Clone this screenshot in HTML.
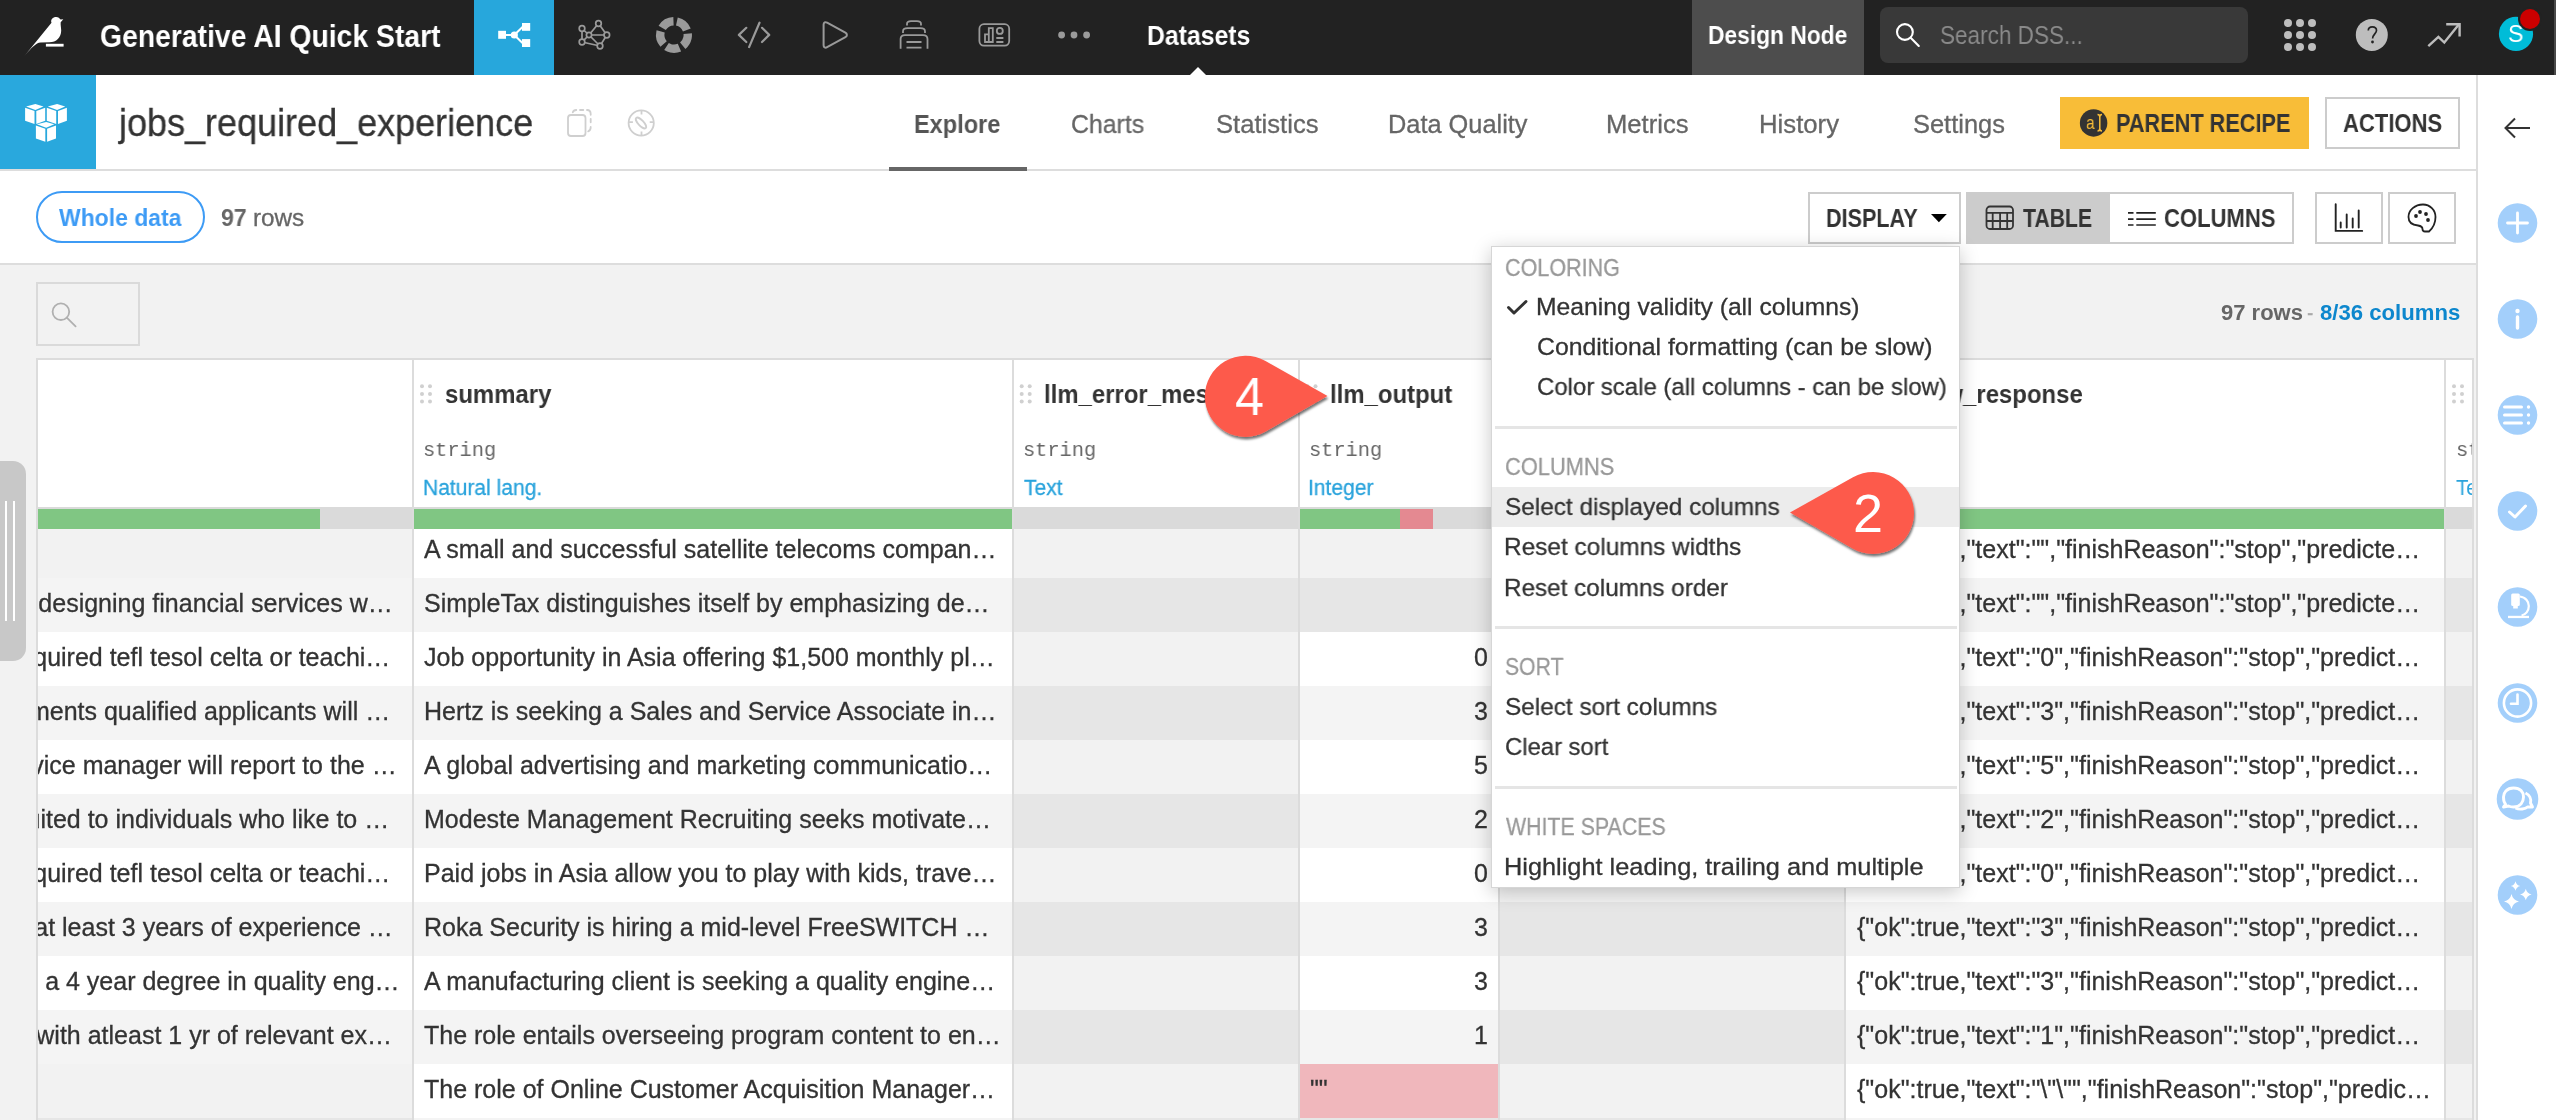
<!DOCTYPE html>
<html><head><meta charset="utf-8"><style>
html,body{margin:0;padding:0;width:2556px;height:1120px;overflow:hidden;background:#f2f2f2;font-family:'Liberation Sans',sans-serif;-webkit-font-smoothing:antialiased}
.t{position:absolute;white-space:pre;line-height:normal;transform-origin:0 0;will-change:transform}
.c{font-family:'Liberation Sans',sans-serif;font-size:25px;-webkit-text-stroke:0.3px #333;line-height:normal;color:#333;white-space:nowrap;overflow:hidden;text-overflow:ellipsis;transform:scaleX(1.0);transform-origin:0 0;will-change:transform}
svg{overflow:visible}
</style></head><body>
<div style="position:absolute;left:0px;top:0px;width:2556px;height:75px;background:#222"></div>
<div style="position:absolute;left:474px;top:0px;width:80px;height:75px;background:#27a7dc"></div>
<div style="position:absolute;left:1692px;top:0px;width:172px;height:75px;background:#4d4d4d"></div>
<div style="position:absolute;left:1880px;top:7px;width:368px;height:56px;background:#393939;border-radius:8px"></div>
<div style="position:absolute;left:2554px;top:0px;width:2px;height:75px;background:#4a4a4a"></div>
<svg style="position:absolute;left:20px;top:12px;" width="50" height="50" viewBox="20 12 50 50"><path fill="#fff" d="M24,56.6 L51.5,22.8 C50.3,19.5 52.8,16.9 56.2,16.9 C58.3,16.9 59.6,18.2 60.6,19.6 L63.3,19.2 L60.7,22.2 C60.4,25 61.2,27.5 61.2,30.5 C61.2,37.5 56.3,42.3 49.5,42.3 L40.5,42.5 C36,43 32,47 24,56.6 Z"/><rect fill="#fff" x="45.9" y="43.8" width="17.7" height="2.8"/></svg>
<div class=t style="left:100.1px;top:17.7px;font-size:32px;font-weight:700;color:#fff;font-family:'Liberation Sans';transform:scaleX(0.8851);">Generative AI Quick Start</div>
<svg style="position:absolute;left:494px;top:15px;" width="40" height="40" viewBox="494 15 40 40"><g fill="#fff" stroke="#fff"><rect x="498.2" y="30.8" width="7.8" height="8" stroke="none"/><rect x="522" y="23" width="8.2" height="7.8" stroke="none"/><rect x="522" y="39.1" width="8.2" height="7.9" stroke="none"/><circle cx="514.3" cy="35" r="3.6" stroke="none"/><path d="M505,35 H514 M514.3,35 L522.5,27 M514.3,35 L522.5,43" stroke-width="2" fill="none"/></g></svg>
<svg style="position:absolute;left:574px;top:15px;" width="40" height="40" viewBox="574 15 40 40"><g stroke="#9a9a9a" stroke-width="1.7" fill="none"><path d="M582,28.5 L589,35 L582,42 Z M589,35 L598.5,23.5 L606.8,35 L600,46 L589,35 M589,35 H606.8 M582,42 L600,46"/><g fill="#222"><circle cx="582" cy="28.5" r="2.8"/><circle cx="598.5" cy="23.5" r="2.8"/><circle cx="606.8" cy="35" r="2.8"/><circle cx="589" cy="35" r="2.6"/><circle cx="582" cy="42" r="2.8"/><circle cx="600" cy="46" r="2.8"/></g></g></svg>
<svg style="position:absolute;left:654px;top:15px;" width="40" height="40" viewBox="654 15 40 40"><circle cx="674" cy="35" r="13.8" fill="none" stroke="#9a9a9a" stroke-width="8.4" stroke-dasharray="13.5 3.8" transform="rotate(-78 674 35)"/></svg>
<svg style="position:absolute;left:734px;top:15px;" width="40" height="40" viewBox="734 15 40 40"><g stroke="#9a9a9a" stroke-width="2.2" fill="none" stroke-linecap="round" stroke-linejoin="round"><path d="M746.3,27.8 L738.9,34.9 L746.3,42 M762,27.8 L769.2,34.9 L762,42 M759.5,22.7 L749.1,47.1"/></g></svg>
<svg style="position:absolute;left:814px;top:15px;" width="40" height="40" viewBox="814 15 40 40"><path d="M823.6,24.6 C823.6,22.4 825.2,21.6 827.1,22.6 L845.4,32.6 C847.4,33.7 847.4,36.1 845.4,37.2 L827.1,47.2 C825.2,48.2 823.6,47.4 823.6,45.2 Z" fill="none" stroke="#9a9a9a" stroke-width="2" stroke-linejoin="round"/></svg>
<svg style="position:absolute;left:894px;top:15px;" width="40" height="40" viewBox="894 15 40 40"><g stroke="#9a9a9a" stroke-width="1.8" fill="none"><path d="M907,25.5 V24 C907,22 909,21.2 911,21.2 H917 C919,21.2 921,22 921,24 V25.5 M903,33 V31.5 C903,29.5 905,28.2 907.5,28.2 H920.5 C923,28.2 925,29.5 925,31.5 V33 M900.6,48.8 V39 C900.6,36.5 902.5,35.2 905,35.2 H923 C925.5,35.2 927.5,36.5 927.5,39 V48.8 M906.5,42 H921.5 M906.5,47.6 H921.5"/></g></svg>
<svg style="position:absolute;left:974px;top:15px;" width="40" height="40" viewBox="974 15 40 40"><g stroke="#9a9a9a" stroke-width="1.8" fill="none"><rect x="979.4" y="24.2" width="29.8" height="21.4" rx="4.5"/><path d="M985,42 V34.3 H988.8 V42 Z M988.8,42 V28.2 H992.8 V42 Z"/><circle cx="999.8" cy="30.9" r="3"/><path d="M996.3,38 H1003.4 M996.3,42 H1003.4"/></g></svg>
<svg style="position:absolute;left:1054px;top:25px;" width="40" height="20" viewBox="1054 25 40 20"><g fill="#9a9a9a"><circle cx="1061.6" cy="35" r="3.4"/><circle cx="1074" cy="35" r="3.4"/><circle cx="1086.6" cy="35" r="3.4"/></g></svg>
<div class=t style="left:1147.1px;top:20.6px;font-size:27px;font-weight:700;color:#fff;font-family:'Liberation Sans';transform:scaleX(0.9182);">Datasets</div>
<svg style="position:absolute;left:1188px;top:66px;" width="20" height="9" viewBox="1188 66 20 9"><path d="M1190,75 L1198,67 L1206,75 Z" fill="#fff"/></svg>
<div class=t style="left:1708.3px;top:20.1px;font-size:26px;font-weight:700;color:#fff;font-family:'Liberation Sans';transform:scaleX(0.8765);">Design Node</div>
<svg style="position:absolute;left:1890px;top:18px;" width="36" height="36" viewBox="1890 18 36 36"><g stroke="#fff" stroke-width="2.1" fill="none"><circle cx="1904.9" cy="32" r="7.9"/><path d="M1910.9,38.1 L1918.8,46" stroke-linecap="round"/></g></svg>
<div class=t style="left:1940.1px;top:20.1px;font-size:26px;font-weight:400;color:#8a8a8a;font-family:'Liberation Sans';transform:scaleX(0.8668);">Search DSS...</div>
<svg style="position:absolute;left:2280px;top:15px;" width="40" height="40" viewBox="2280 15 40 40"><g fill="#bdbdbd"><circle cx="2288" cy="23" r="4"/><circle cx="2288" cy="35" r="4"/><circle cx="2288" cy="47" r="4"/><circle cx="2300" cy="23" r="4"/><circle cx="2300" cy="35" r="4"/><circle cx="2300" cy="47" r="4"/><circle cx="2312" cy="23" r="4"/><circle cx="2312" cy="35" r="4"/><circle cx="2312" cy="47" r="4"/></g></svg>
<svg style="position:absolute;left:2350px;top:13px;" width="44" height="44" viewBox="2350 13 44 44"><circle cx="2371.8" cy="34.9" r="16" fill="#bdbdbd"/><path d="M2368.3,30.5 C2368.3,27.5 2370,26.8 2372.3,26.8 C2374.8,26.8 2376.5,28.3 2376.5,30.5 C2376.5,33.5 2372.6,34.5 2372.6,38.5" stroke="#222" stroke-width="1.7" fill="none"/><circle cx="2372.5" cy="42" r="1.4" fill="#222"/></svg>
<svg style="position:absolute;left:2420px;top:15px;" width="48" height="40" viewBox="2420 15 48 40"><g stroke="#bdbdbd" stroke-width="2.4" fill="none"><path d="M2428.3,46.1 L2438.4,36.9 L2444.3,42.5 L2459,24.3"/><path d="M2446.2,24.2 H2459.6 V36.4"/></g></svg>
<svg style="position:absolute;left:2490px;top:0px;" width="66" height="60" viewBox="2490 0 66 60"><circle cx="2516" cy="33.9" r="17.1" fill="#00bcd8"/><circle cx="2530" cy="19" r="12" fill="#222"/><circle cx="2530" cy="19" r="10" fill="#cc0000"/></svg>
<div class=t style="left:2507.5px;top:20.4px;font-size:24px;font-weight:400;color:#fff;font-family:'Liberation Sans';transform:scaleX(0.9643);">S</div>
<div style="position:absolute;left:0px;top:75px;width:2477px;height:188px;background:#fff"></div>
<div style="position:absolute;left:0px;top:169px;width:2477px;height:2px;background:#ddd"></div>
<div style="position:absolute;left:0px;top:263px;width:2477px;height:2px;background:#ddd"></div>
<div style="position:absolute;left:0px;top:75px;width:96px;height:94px;background:#29a8dd"></div>
<svg style="position:absolute;left:20px;top:100px;" width="52" height="46" viewBox="20 100 52 46"><g fill="#fff"><polygon points="26.1,106.5 35.4,104.1 43.5,106.5 35.4,110.0"/><polygon points="25.1,107.8 34.5,111.0 34.5,124.0 25.1,120.8"/><polygon points="36.3,111.0 45.2,107.8 45.2,120.8 36.3,124.0"/><polygon points="47.8,106.5 57.1,104.1 65.2,106.5 57.1,110.0"/><polygon points="46.8,107.8 56.2,111.0 56.2,124.0 46.8,120.8"/><polygon points="58.0,111.0 66.9,107.8 66.9,120.8 58.0,124.0"/><polygon points="36.9,124.3 46.2,121.9 54.3,124.3 46.2,127.8"/><polygon points="35.9,125.6 45.3,128.8 45.3,141.8 35.9,138.6"/><polygon points="47.1,128.8 56.0,125.6 56.0,138.6 47.1,141.8"/></g></svg>
<div class=t style="left:118.9px;top:102.0px;font-size:38px;font-weight:400;color:#333;font-family:'Liberation Sans';transform:scaleX(0.9470);-webkit-text-stroke:0.3px #333;">jobs_required_experience</div>
<svg style="position:absolute;left:562px;top:104px;" width="34" height="38" viewBox="562 104 34 38"><g stroke="#cfcfcf" stroke-width="1.8" fill="none" stroke-linecap="round"><rect x="568" y="115" width="17.5" height="21" rx="3"/><path d="M572.8,112.3 C573.3,110.6 574.6,110 576.3,110 M580,110 H583.3 M587,110 C589.5,110 590.7,111.5 590.7,114 V114.8 M590.7,118.8 V122.3 M590.7,127 C590.7,129.8 589.6,131 588.2,131.4"/></g></svg>
<svg style="position:absolute;left:620px;top:102px;" width="42" height="42" viewBox="620 102 42 42"><g stroke="#cfcfcf" stroke-width="1.8" fill="none"><circle cx="641.2" cy="123" r="12.6"/><path d="M641.5,110.8 V114.6 M641.5,131.4 V135.2 M629,122.2 H632.9 M649.7,122.2 H653.5"/><ellipse cx="641" cy="123" rx="7" ry="2.7" transform="rotate(47 641 123)"/></g></svg>
<div class=t style="left:914.1px;top:108.6px;font-size:26px;font-weight:700;color:#555;font-family:'Liberation Sans';transform:scaleX(0.9051);">Explore</div>
<div style="position:absolute;left:889px;top:167px;width:138px;height:4px;background:#666"></div>
<div class=t style="left:1071.0px;top:109.5px;font-size:25px;font-weight:400;color:#666;font-family:'Liberation Sans';transform:scaleX(0.9926);-webkit-text-stroke:0.3px #666;">Charts</div>
<div class=t style="left:1216.0px;top:109.5px;font-size:25px;font-weight:400;color:#666;font-family:'Liberation Sans';transform:scaleX(1.0251);-webkit-text-stroke:0.3px #666;">Statistics</div>
<div class=t style="left:1388.0px;top:109.5px;font-size:25px;font-weight:400;color:#666;font-family:'Liberation Sans';transform:scaleX(1.0143);-webkit-text-stroke:0.3px #666;">Data Quality</div>
<div class=t style="left:1605.5px;top:109.5px;font-size:25px;font-weight:400;color:#666;font-family:'Liberation Sans';transform:scaleX(1.0249);-webkit-text-stroke:0.3px #666;">Metrics</div>
<div class=t style="left:1759.4px;top:109.5px;font-size:25px;font-weight:400;color:#666;font-family:'Liberation Sans';transform:scaleX(1.0291);-webkit-text-stroke:0.3px #666;">History</div>
<div class=t style="left:1912.6px;top:109.5px;font-size:25px;font-weight:400;color:#666;font-family:'Liberation Sans';transform:scaleX(1.0177);-webkit-text-stroke:0.3px #666;">Settings</div>
<div style="position:absolute;left:2060px;top:97px;width:249px;height:52px;background:#f8bd38"></div>
<svg style="position:absolute;left:2076px;top:106px;" width="36" height="36" viewBox="2076 106 36 36"><circle cx="2093.6" cy="122.9" r="13.75" fill="#333"/></svg>
<div class=t style="left:2086.0px;top:112.0px;font-size:19px;font-weight:400;color:#f8bd38;font-family:'Liberation Sans';transform:scaleX(0.8182);">a</div>
<svg style="position:absolute;left:2094px;top:112px;" width="10" height="24" viewBox="2094 112 10 24"><g stroke="#f8bd38" stroke-width="1.5" fill="none"><path d="M2097.5,114.5 C2099,114.5 2099.8,115.5 2099.8,117 V128.5 C2099.8,130 2099,131 2097.5,131 M2102,114.5 C2100.6,114.5 2099.8,115.5 2099.8,117 M2099.8,128.5 C2099.8,130 2100.6,131 2102,131"/></g></svg>
<div class=t style="left:2116.1px;top:109.0px;font-size:25px;font-weight:700;color:#333;font-family:'Liberation Sans';transform:scaleX(0.8681);">PARENT RECIPE</div>
<div style="position:absolute;left:2325px;top:97px;width:135px;height:52px;background:#fff;box-sizing:border-box;border:2px solid #ccc"></div>
<div class=t style="left:2343.0px;top:109.0px;font-size:25px;font-weight:700;color:#333;font-family:'Liberation Sans';transform:scaleX(0.8817);">ACTIONS</div>
<div style="position:absolute;left:2477px;top:75px;width:79px;height:1045px;background:#fff"></div>
<div style="position:absolute;left:2476px;top:75px;width:2px;height:1045px;background:#ddd"></div>
<svg style="position:absolute;left:2500px;top:110px;" width="36" height="36" viewBox="2500 110 36 36"><g stroke="#333" stroke-width="2" fill="none"><path d="M2505.5,128 H2530 M2515,118.5 L2505.5,128 L2515,137.5"/></g></svg>
<svg style="position:absolute;left:2490px;top:190px;" width="60" height="740" viewBox="2490 190 60 740"><circle cx="2517.5" cy="223" r="19.8" fill="#a3cffb"/><circle cx="2517.5" cy="319" r="19.8" fill="#a3cffb"/><circle cx="2517.5" cy="415" r="19.8" fill="#a3cffb"/><circle cx="2517.5" cy="511" r="19.8" fill="#a3cffb"/><circle cx="2517.5" cy="607" r="19.8" fill="#a3cffb"/><circle cx="2517.5" cy="703" r="19.8" fill="#a3cffb"/><circle cx="2517.5" cy="799" r="20.8" fill="#a3cffb"/><circle cx="2517.5" cy="895" r="19.8" fill="#a3cffb"/><path d="M2517.5,213 V233 M2507.5,223 H2527.5" stroke="#fff" stroke-width="2.8" stroke-linecap="round"/><circle cx="2517.5" cy="311" r="2.2" fill="#fff"/><path d="M2517.5,317 V328" stroke="#fff" stroke-width="3.4" stroke-linecap="round"/><path d="M2504.5,407 H2521.5" stroke="#fff" stroke-width="3" stroke-linecap="round"/><circle cx="2528.5" cy="407" r="1.7" fill="#fff"/><path d="M2504.5,415 H2521.5" stroke="#fff" stroke-width="3" stroke-linecap="round"/><circle cx="2528.5" cy="415" r="1.7" fill="#fff"/><path d="M2504.5,423 H2521.5" stroke="#fff" stroke-width="3" stroke-linecap="round"/><circle cx="2528.5" cy="423" r="1.7" fill="#fff"/><path d="M2509.5,512 L2515.0,517 L2525.5,506" stroke="#fff" stroke-width="3" stroke-linecap="round" stroke-linejoin="round" fill="none"/><g fill="#fff"><rect x="2511.2" y="593.5" width="8.6" height="12.5" rx="1.5"/><rect x="2513.2" y="605" width="4.6" height="3.5"/><path d="M2519.8,596.5 C2526.0,597 2528.8,602 2528.8,606 C2528.8,611 2525.5,615 2521.5,615.5" stroke="#fff" stroke-width="2.2" fill="none"/><rect x="2508.0" y="615.8" width="21" height="2.3"/></g><circle cx="2517.5" cy="703" r="13.6" stroke="#fff" stroke-width="2.6" fill="none"/><path d="M2517.5,694.5 V703.8 H2511.0" stroke="#fff" stroke-width="2.6" fill="none" stroke-linecap="round"/><g stroke="#fff" stroke-width="2.9" fill="none" stroke-linejoin="round"><path d="M2513.5,788 C2506.5,788 2503.5,793 2503.5,797 C2503.5,801 2504.5,803 2505.5,804 L2503.5,807 L2508.5,806 C2509.5,806.5 2511.5,807 2513.5,807 C2520.5,807 2523.5,802 2523.5,797 C2523.5,792 2520.5,788 2513.5,788 Z"/><path d="M2525.5,793 C2529.5,795 2531.5,799 2530.5,803 L2532.5,807 L2527.5,807 C2525.5,809 2519.5,810 2515.5,808"/></g><path d="M2511.5,894.0 Q2512.85,900.15 2519.0,901.5 Q2512.85,902.85 2511.5,909.0 Q2510.15,902.85 2504.0,901.5 Q2510.15,900.15 2511.5,894.0 Z" fill="#fff"/><path d="M2525.8,888.7 Q2526.844,893.456 2531.6000000000004,894.5 Q2526.844,895.544 2525.8,900.3 Q2524.7560000000003,895.544 2520.0,894.5 Q2524.7560000000003,893.456 2525.8,888.7 Z" fill="#fff"/><path d="M2515.5,881.2 Q2516.364,885.136 2520.3,886 Q2516.364,886.864 2515.5,890.8 Q2514.636,886.864 2510.7,886 Q2514.636,885.136 2515.5,881.2 Z" fill="#fff"/></svg>
<div style="position:absolute;left:36px;top:191px;width:169px;height:52px;box-sizing:border-box;border:2px solid #3d9bf5;border-radius:26px"></div>
<div class=t style="left:58.5px;top:204.1px;font-size:24px;font-weight:700;color:#3d9bf5;font-family:'Liberation Sans';transform:scaleX(0.9560);">Whole data</div>
<div class=t style="left:221.4px;top:203.7px;font-size:24px;font-weight:700;color:#666;font-family:'Liberation Sans';transform:scaleX(0.9640);">97</div>
<div class=t style="left:253.3px;top:203.7px;font-size:24px;font-weight:400;color:#666;font-family:'Liberation Sans';transform:scaleX(1.0106);-webkit-text-stroke:0.3px #666;">rows</div>
<div style="position:absolute;left:1808px;top:192px;width:153px;height:52px;background:#fff;box-sizing:border-box;border:2px solid #ccc"></div>
<div class=t style="left:1826.1px;top:203.8px;font-size:25px;font-weight:700;color:#333;font-family:'Liberation Sans';transform:scaleX(0.8635);">DISPLAY</div>
<svg style="position:absolute;left:1928px;top:210px;" width="22" height="16" viewBox="1928 210 22 16"><path d="M1931,214 L1946.8,214 L1938.9,222.3 Z" fill="#000"/></svg>
<div style="position:absolute;left:1966px;top:192px;width:328px;height:52px;background:#fff;box-sizing:border-box;border:2px solid #ccc"></div>
<div style="position:absolute;left:1966px;top:192px;width:144px;height:52px;background:#ccc"></div>
<svg style="position:absolute;left:1982px;top:202px;" width="36" height="32" viewBox="1982 202 36 32"><g stroke="#333" stroke-width="1.8" fill="none"><rect x="1986.5" y="206.5" width="26.5" height="22.5" rx="3.5"/><path d="M1986.5,212.8 H2013 M1986.5,221 H2013 M1992.7,212.8 V229 M2000.1,212.8 V229 M2007.2,212.8 V229"/></g></svg>
<div class=t style="left:2022.5px;top:203.8px;font-size:25px;font-weight:700;color:#333;font-family:'Liberation Sans';transform:scaleX(0.8478);">TABLE</div>
<svg style="position:absolute;left:2124px;top:206px;" width="36" height="24" viewBox="2124 206 36 24"><g stroke="#222" stroke-width="1.6"><path d="M2128,212.9 H2133.5 M2128,219.1 H2133.5 M2128,225 H2133.5 M2136.3,212.9 H2155.8 M2136.3,219.1 H2155.8 M2136.3,225 H2155.8"/></g></svg>
<div class=t style="left:2164.1px;top:203.8px;font-size:25px;font-weight:700;color:#333;font-family:'Liberation Sans';transform:scaleX(0.8821);">COLUMNS</div>
<div style="position:absolute;left:2315px;top:192px;width:68px;height:52px;background:#fff;box-sizing:border-box;border:2px solid #ccc"></div>
<div style="position:absolute;left:2388px;top:192px;width:68px;height:52px;background:#fff;box-sizing:border-box;border:2px solid #ccc"></div>
<svg style="position:absolute;left:2328px;top:200px;" width="40" height="36" viewBox="2328 200 40 36"><g stroke="#222" stroke-width="1.9" fill="none" stroke-linecap="round"><path d="M2335.7,204.3 V230.9 H2362.2 M2340.7,222.5 V227.5 M2346.7,214.5 V227.5 M2352.7,218.5 V227.5 M2358.7,210.5 V227.5"/></g></svg>
<svg style="position:absolute;left:2402px;top:200px;" width="40" height="36" viewBox="2402 200 40 36"><path d="M2423,204.5 C2415,204.5 2408.5,210 2408.5,217 C2408.5,222 2412,225 2418,225.5 C2421,226 2422.5,227 2422.5,229 C2422.5,231 2423.5,231.5 2425,231.5 L2429,231.5 C2433,228 2435.5,223 2435.5,217 C2435.5,210 2430,204.5 2423,204.5 Z" stroke="#222" stroke-width="1.8" fill="none"/><g fill="#222"><circle cx="2416" cy="216" r="1.9"/><circle cx="2420" cy="212" r="1.9"/><circle cx="2426" cy="214" r="1.9"/><circle cx="2428" cy="220" r="1.9"/></g></svg>
<div style="position:absolute;left:0px;top:265px;width:2476px;height:855px;background:#f2f2f2"></div>
<div style="position:absolute;left:36px;top:282px;width:104px;height:64px;box-sizing:border-box;border:2px solid #dadada"></div>
<svg style="position:absolute;left:48px;top:300px;" width="32" height="32" viewBox="48 300 32 32"><g stroke="#b0b0b0" stroke-width="1.8" fill="none"><circle cx="60.9" cy="311.7" r="8.3"/><path d="M66.8,317.6 L75.6,326.4" stroke-linecap="round"/></g></svg>
<div class=t style="left:2220.5px;top:299.8px;font-size:22px;font-weight:700;color:#666;font-family:'Liberation Sans';transform:scaleX(0.9976);">97 rows</div>
<div class=t style="left:2307.0px;top:299.8px;font-size:22px;font-weight:400;color:#aaa;font-family:'Liberation Sans';transform:scaleX(0.8571);-webkit-text-stroke:0.3px #aaa;">-</div>
<div class=t style="left:2320.0px;top:299.8px;font-size:22px;font-weight:700;color:#0d87cd;font-family:'Liberation Sans';transform:scaleX(1.0061);">8/36 columns</div>
<div style="position:absolute;left:0px;top:461px;width:26px;height:200px;background:#c8c8c8;border-radius:0 13px 13px 0"></div>
<div style="position:absolute;left:5px;top:501px;width:2px;height:120px;background:#fff"></div>
<div style="position:absolute;left:13px;top:501px;width:2px;height:120px;background:#fff"></div>
<div style="position:absolute;left:36px;top:358px;width:2438px;height:762px;background:#fff"></div>
<div style="position:absolute;left:38px;top:360px;width:2434px;height:147px;background:#fff"></div>
<div style="position:absolute;left:38px;top:507px;width:2434px;height:22px;background:#dadada"></div>
<div style="position:absolute;left:38px;top:529px;width:374px;height:49px;background:#f2f2f2"></div>
<div style="position:absolute;left:38px;top:578px;width:374px;height:54px;background:#f4f4f4"></div>
<div style="position:absolute;left:38px;top:632px;width:374px;height:54px;background:#ffffff"></div>
<div style="position:absolute;left:38px;top:686px;width:374px;height:54px;background:#f4f4f4"></div>
<div style="position:absolute;left:38px;top:740px;width:374px;height:54px;background:#ffffff"></div>
<div style="position:absolute;left:38px;top:794px;width:374px;height:54px;background:#f4f4f4"></div>
<div style="position:absolute;left:38px;top:848px;width:374px;height:54px;background:#ffffff"></div>
<div style="position:absolute;left:38px;top:902px;width:374px;height:54px;background:#f4f4f4"></div>
<div style="position:absolute;left:38px;top:956px;width:374px;height:54px;background:#ffffff"></div>
<div style="position:absolute;left:38px;top:1010px;width:374px;height:54px;background:#f4f4f4"></div>
<div style="position:absolute;left:38px;top:1064px;width:374px;height:54px;background:#f2f2f2"></div>
<div style="position:absolute;left:38px;top:1118px;width:374px;height:2px;background:#e6e6e6"></div>
<div style="position:absolute;left:414px;top:529px;width:598px;height:49px;background:#ffffff"></div>
<div style="position:absolute;left:414px;top:578px;width:598px;height:54px;background:#f4f4f4"></div>
<div style="position:absolute;left:414px;top:632px;width:598px;height:54px;background:#ffffff"></div>
<div style="position:absolute;left:414px;top:686px;width:598px;height:54px;background:#f4f4f4"></div>
<div style="position:absolute;left:414px;top:740px;width:598px;height:54px;background:#ffffff"></div>
<div style="position:absolute;left:414px;top:794px;width:598px;height:54px;background:#f4f4f4"></div>
<div style="position:absolute;left:414px;top:848px;width:598px;height:54px;background:#ffffff"></div>
<div style="position:absolute;left:414px;top:902px;width:598px;height:54px;background:#f4f4f4"></div>
<div style="position:absolute;left:414px;top:956px;width:598px;height:54px;background:#ffffff"></div>
<div style="position:absolute;left:414px;top:1010px;width:598px;height:54px;background:#f4f4f4"></div>
<div style="position:absolute;left:414px;top:1064px;width:598px;height:54px;background:#ffffff"></div>
<div style="position:absolute;left:414px;top:1118px;width:598px;height:2px;background:#f4f4f4"></div>
<div style="position:absolute;left:1014px;top:529px;width:284px;height:49px;background:#f2f2f2"></div>
<div style="position:absolute;left:1014px;top:578px;width:284px;height:54px;background:#e6e6e6"></div>
<div style="position:absolute;left:1014px;top:632px;width:284px;height:54px;background:#f2f2f2"></div>
<div style="position:absolute;left:1014px;top:686px;width:284px;height:54px;background:#e6e6e6"></div>
<div style="position:absolute;left:1014px;top:740px;width:284px;height:54px;background:#f2f2f2"></div>
<div style="position:absolute;left:1014px;top:794px;width:284px;height:54px;background:#e6e6e6"></div>
<div style="position:absolute;left:1014px;top:848px;width:284px;height:54px;background:#f2f2f2"></div>
<div style="position:absolute;left:1014px;top:902px;width:284px;height:54px;background:#e6e6e6"></div>
<div style="position:absolute;left:1014px;top:956px;width:284px;height:54px;background:#f2f2f2"></div>
<div style="position:absolute;left:1014px;top:1010px;width:284px;height:54px;background:#e6e6e6"></div>
<div style="position:absolute;left:1014px;top:1064px;width:284px;height:54px;background:#f2f2f2"></div>
<div style="position:absolute;left:1014px;top:1118px;width:284px;height:2px;background:#e6e6e6"></div>
<div style="position:absolute;left:1300px;top:529px;width:198px;height:49px;background:#f2f2f2"></div>
<div style="position:absolute;left:1300px;top:578px;width:198px;height:54px;background:#e6e6e6"></div>
<div style="position:absolute;left:1300px;top:632px;width:198px;height:54px;background:#ffffff"></div>
<div style="position:absolute;left:1300px;top:686px;width:198px;height:54px;background:#f4f4f4"></div>
<div style="position:absolute;left:1300px;top:740px;width:198px;height:54px;background:#ffffff"></div>
<div style="position:absolute;left:1300px;top:794px;width:198px;height:54px;background:#f4f4f4"></div>
<div style="position:absolute;left:1300px;top:848px;width:198px;height:54px;background:#ffffff"></div>
<div style="position:absolute;left:1300px;top:902px;width:198px;height:54px;background:#f4f4f4"></div>
<div style="position:absolute;left:1300px;top:956px;width:198px;height:54px;background:#ffffff"></div>
<div style="position:absolute;left:1300px;top:1010px;width:198px;height:54px;background:#f4f4f4"></div>
<div style="position:absolute;left:1300px;top:1064px;width:198px;height:54px;background:#f0b7bc"></div>
<div style="position:absolute;left:1300px;top:1118px;width:198px;height:2px;background:#e6e6e6"></div>
<div style="position:absolute;left:1500px;top:529px;width:344px;height:49px;background:#f2f2f2"></div>
<div style="position:absolute;left:1500px;top:578px;width:344px;height:54px;background:#e6e6e6"></div>
<div style="position:absolute;left:1500px;top:632px;width:344px;height:54px;background:#f2f2f2"></div>
<div style="position:absolute;left:1500px;top:686px;width:344px;height:54px;background:#e6e6e6"></div>
<div style="position:absolute;left:1500px;top:740px;width:344px;height:54px;background:#f2f2f2"></div>
<div style="position:absolute;left:1500px;top:794px;width:344px;height:54px;background:#e6e6e6"></div>
<div style="position:absolute;left:1500px;top:848px;width:344px;height:54px;background:#f2f2f2"></div>
<div style="position:absolute;left:1500px;top:902px;width:344px;height:54px;background:#e6e6e6"></div>
<div style="position:absolute;left:1500px;top:956px;width:344px;height:54px;background:#f2f2f2"></div>
<div style="position:absolute;left:1500px;top:1010px;width:344px;height:54px;background:#e6e6e6"></div>
<div style="position:absolute;left:1500px;top:1064px;width:344px;height:54px;background:#f2f2f2"></div>
<div style="position:absolute;left:1500px;top:1118px;width:344px;height:2px;background:#e6e6e6"></div>
<div style="position:absolute;left:1846px;top:529px;width:598px;height:49px;background:#ffffff"></div>
<div style="position:absolute;left:1846px;top:578px;width:598px;height:54px;background:#f4f4f4"></div>
<div style="position:absolute;left:1846px;top:632px;width:598px;height:54px;background:#ffffff"></div>
<div style="position:absolute;left:1846px;top:686px;width:598px;height:54px;background:#f4f4f4"></div>
<div style="position:absolute;left:1846px;top:740px;width:598px;height:54px;background:#ffffff"></div>
<div style="position:absolute;left:1846px;top:794px;width:598px;height:54px;background:#f4f4f4"></div>
<div style="position:absolute;left:1846px;top:848px;width:598px;height:54px;background:#ffffff"></div>
<div style="position:absolute;left:1846px;top:902px;width:598px;height:54px;background:#f4f4f4"></div>
<div style="position:absolute;left:1846px;top:956px;width:598px;height:54px;background:#ffffff"></div>
<div style="position:absolute;left:1846px;top:1010px;width:598px;height:54px;background:#f4f4f4"></div>
<div style="position:absolute;left:1846px;top:1064px;width:598px;height:54px;background:#ffffff"></div>
<div style="position:absolute;left:1846px;top:1118px;width:598px;height:2px;background:#f4f4f4"></div>
<div style="position:absolute;left:2446px;top:529px;width:26px;height:49px;background:#f2f2f2"></div>
<div style="position:absolute;left:2446px;top:578px;width:26px;height:54px;background:#e6e6e6"></div>
<div style="position:absolute;left:2446px;top:632px;width:26px;height:54px;background:#f2f2f2"></div>
<div style="position:absolute;left:2446px;top:686px;width:26px;height:54px;background:#e6e6e6"></div>
<div style="position:absolute;left:2446px;top:740px;width:26px;height:54px;background:#f2f2f2"></div>
<div style="position:absolute;left:2446px;top:794px;width:26px;height:54px;background:#e6e6e6"></div>
<div style="position:absolute;left:2446px;top:848px;width:26px;height:54px;background:#f2f2f2"></div>
<div style="position:absolute;left:2446px;top:902px;width:26px;height:54px;background:#e6e6e6"></div>
<div style="position:absolute;left:2446px;top:956px;width:26px;height:54px;background:#f2f2f2"></div>
<div style="position:absolute;left:2446px;top:1010px;width:26px;height:54px;background:#e6e6e6"></div>
<div style="position:absolute;left:2446px;top:1064px;width:26px;height:54px;background:#f2f2f2"></div>
<div style="position:absolute;left:2446px;top:1118px;width:26px;height:2px;background:#e6e6e6"></div>
<div style="position:absolute;left:38px;top:509px;width:282px;height:20px;background:#80c683"></div>
<div style="position:absolute;left:414px;top:509px;width:598px;height:20px;background:#80c683"></div>
<div style="position:absolute;left:1300px;top:509px;width:100px;height:20px;background:#80c683"></div>
<div style="position:absolute;left:1400px;top:509px;width:33px;height:20px;background:#e48991"></div>
<div style="position:absolute;left:1846px;top:509px;width:598px;height:20px;background:#80c683"></div>
<div style="position:absolute;left:36px;top:358px;width:2px;height:762px;background:#dcdcdc"></div>
<div style="position:absolute;left:412px;top:358px;width:2px;height:762px;background:#dcdcdc"></div>
<div style="position:absolute;left:1012px;top:358px;width:2px;height:762px;background:#dcdcdc"></div>
<div style="position:absolute;left:1298px;top:358px;width:2px;height:762px;background:#dcdcdc"></div>
<div style="position:absolute;left:1498px;top:358px;width:2px;height:762px;background:#dcdcdc"></div>
<div style="position:absolute;left:1844px;top:358px;width:2px;height:762px;background:#dcdcdc"></div>
<div style="position:absolute;left:2444px;top:358px;width:2px;height:762px;background:#dcdcdc"></div>
<div style="position:absolute;left:2472px;top:358px;width:2px;height:762px;background:#dcdcdc"></div>
<div style="position:absolute;left:36px;top:358px;width:2438px;height:2px;background:#dcdcdc"></div>
<svg style="position:absolute;left:400px;top:375px;" width="2100" height="40" viewBox="400 375 2100 40"><circle cx="422" cy="386.2" r="2" fill="#d0d0d0"/><circle cx="422" cy="393.9" r="2" fill="#d0d0d0"/><circle cx="422" cy="401.59999999999997" r="2" fill="#d0d0d0"/><circle cx="430" cy="386.2" r="2" fill="#d0d0d0"/><circle cx="430" cy="393.9" r="2" fill="#d0d0d0"/><circle cx="430" cy="401.59999999999997" r="2" fill="#d0d0d0"/><circle cx="1021.7" cy="386.2" r="2" fill="#d0d0d0"/><circle cx="1021.7" cy="393.9" r="2" fill="#d0d0d0"/><circle cx="1021.7" cy="401.59999999999997" r="2" fill="#d0d0d0"/><circle cx="1029.7" cy="386.2" r="2" fill="#d0d0d0"/><circle cx="1029.7" cy="393.9" r="2" fill="#d0d0d0"/><circle cx="1029.7" cy="401.59999999999997" r="2" fill="#d0d0d0"/><circle cx="1307.5" cy="386.2" r="2" fill="#d0d0d0"/><circle cx="1307.5" cy="393.9" r="2" fill="#d0d0d0"/><circle cx="1307.5" cy="401.59999999999997" r="2" fill="#d0d0d0"/><circle cx="1315.5" cy="386.2" r="2" fill="#d0d0d0"/><circle cx="1315.5" cy="393.9" r="2" fill="#d0d0d0"/><circle cx="1315.5" cy="401.59999999999997" r="2" fill="#d0d0d0"/><circle cx="1853" cy="386.2" r="2" fill="#d0d0d0"/><circle cx="1853" cy="393.9" r="2" fill="#d0d0d0"/><circle cx="1853" cy="401.59999999999997" r="2" fill="#d0d0d0"/><circle cx="1861" cy="386.2" r="2" fill="#d0d0d0"/><circle cx="1861" cy="393.9" r="2" fill="#d0d0d0"/><circle cx="1861" cy="401.59999999999997" r="2" fill="#d0d0d0"/><circle cx="2454" cy="386.2" r="2" fill="#d0d0d0"/><circle cx="2454" cy="393.9" r="2" fill="#d0d0d0"/><circle cx="2454" cy="401.59999999999997" r="2" fill="#d0d0d0"/><circle cx="2462" cy="386.2" r="2" fill="#d0d0d0"/><circle cx="2462" cy="393.9" r="2" fill="#d0d0d0"/><circle cx="2462" cy="401.59999999999997" r="2" fill="#d0d0d0"/></svg>
<div class=t style="left:445.1px;top:379.1px;font-size:26px;font-weight:700;color:#333;font-family:'Liberation Sans';transform:scaleX(0.9200);">summary</div>
<div class=t style="left:423.0px;top:438.5px;font-size:21px;font-weight:400;color:#666;font-family:'Liberation Mono';transform:scaleX(0.9670);">string</div>
<div class=t style="left:423.0px;top:475.4px;font-size:22px;font-weight:400;color:#29a3dc;font-family:'Liberation Sans';transform:scaleX(0.9550);-webkit-text-stroke:0.3px #29a3dc;">Natural lang.</div>
<div class=t style="left:1044.2px;top:379.1px;font-size:26px;font-weight:700;color:#333;font-family:'Liberation Sans';transform:scaleX(0.9200);">llm_error_message</div>
<div class=t style="left:1023.0px;top:438.5px;font-size:21px;font-weight:400;color:#666;font-family:'Liberation Mono';transform:scaleX(0.9670);">string</div>
<div class=t style="left:1024.0px;top:475.4px;font-size:22px;font-weight:400;color:#29a3dc;font-family:'Liberation Sans';transform:scaleX(0.9550);-webkit-text-stroke:0.3px #29a3dc;">Text</div>
<div class=t style="left:1330.2px;top:379.1px;font-size:26px;font-weight:700;color:#333;font-family:'Liberation Sans';transform:scaleX(0.9200);">llm_output</div>
<div class=t style="left:1309.0px;top:438.5px;font-size:21px;font-weight:400;color:#666;font-family:'Liberation Mono';transform:scaleX(0.9670);">string</div>
<div class=t style="left:1308.1px;top:475.4px;font-size:22px;font-weight:400;color:#29a3dc;font-family:'Liberation Sans';transform:scaleX(0.9550);-webkit-text-stroke:0.3px #29a3dc;">Integer</div>
<div class=t style="left:1873.7px;top:379.1px;font-size:26px;font-weight:700;color:#333;font-family:'Liberation Sans';transform:scaleX(0.9200);">llm_raw_response</div>
<div class=t style="left:1855.0px;top:438.5px;font-size:21px;font-weight:400;color:#666;font-family:'Liberation Mono';transform:scaleX(0.9670);">string</div>
<div class=t style="left:1856.0px;top:475.4px;font-size:22px;font-weight:400;color:#29a3dc;font-family:'Liberation Sans';transform:scaleX(0.9550);-webkit-text-stroke:0.3px #29a3dc;">Text</div>
<div style="position:absolute;left:2446px;top:360px;width:26px;height:760px;overflow:hidden">
<div class=t style="left:9.5px;top:79.3px;font-size:21px;color:#666;font-family:'Liberation Mono';transform:scaleX(0.967)">string</div>
<div class=t style="left:9.5px;top:115.4px;font-size:22px;color:#29a3dc;transform:scaleX(0.93)">Text</div>
</div>
<div style="position:absolute;left:424px;top:535.0px;width:577px;height:32px;overflow:hidden"><div class=c style="width:577.0px;text-align:left;color:#333">A small and successful satellite telecoms company operating in</div></div>
<div style="position:absolute;left:1857px;top:535.0px;width:575px;height:32px;overflow:hidden"><div class=c style="width:575.0px;text-align:left;color:#333">{"ok":true,"text":"","finishReason":"stop","predictedClass":"x"}</div></div>
<div style="position:absolute;left:38px;top:589.0px;width:374px;height:32px;overflow:hidden"><div class=c style="position:absolute;right:19.5px;top:0;width:max-content;transform-origin:100% 0">ke designing financial services w…</div></div>
<div style="position:absolute;left:424px;top:589.0px;width:577px;height:32px;overflow:hidden"><div class=c style="width:577.0px;text-align:left;color:#333">SimpleTax distinguishes itself by emphasizing design and usability</div></div>
<div style="position:absolute;left:1857px;top:589.0px;width:575px;height:32px;overflow:hidden"><div class=c style="width:575.0px;text-align:left;color:#333">{"ok":true,"text":"","finishReason":"stop","predictedClass":"x"}</div></div>
<div style="position:absolute;left:38px;top:643.0px;width:374px;height:32px;overflow:hidden"><div class=c style="position:absolute;right:22.0px;top:0;width:max-content;transform-origin:100% 0">required tefl tesol celta or teachi…</div></div>
<div style="position:absolute;left:424px;top:643.0px;width:577px;height:32px;overflow:hidden"><div class=c style="width:577.0px;text-align:left;color:#333">Job opportunity in Asia offering $1,500 monthly plus housing and more</div></div>
<div style="position:absolute;left:1310px;top:643.0px;width:178px;height:32px;overflow:hidden"><div class=c style="width:178.0px;text-align:right;color:#333">0</div></div>
<div style="position:absolute;left:1857px;top:643.0px;width:575px;height:32px;overflow:hidden"><div class=c style="width:575.0px;text-align:left;color:#333">{"ok":true,"text":"0","finishReason":"stop","predictedClass":"x"}</div></div>
<div style="position:absolute;left:38px;top:697.0px;width:374px;height:32px;overflow:hidden"><div class=c style="position:absolute;right:22.0px;top:0;width:max-content;transform-origin:100% 0">ements qualified applicants will …</div></div>
<div style="position:absolute;left:424px;top:697.0px;width:577px;height:32px;overflow:hidden"><div class=c style="width:577.0px;text-align:left;color:#333">Hertz is seeking a Sales and Service Associate in Myrtle</div></div>
<div style="position:absolute;left:1310px;top:697.0px;width:178px;height:32px;overflow:hidden"><div class=c style="width:178.0px;text-align:right;color:#333">3</div></div>
<div style="position:absolute;left:1857px;top:697.0px;width:575px;height:32px;overflow:hidden"><div class=c style="width:575.0px;text-align:left;color:#333">{"ok":true,"text":"3","finishReason":"stop","predictedClass":"x"}</div></div>
<div style="position:absolute;left:38px;top:751.0px;width:374px;height:32px;overflow:hidden"><div class=c style="position:absolute;right:15.0px;top:0;width:max-content;transform-origin:100% 0">ervice manager will report to the …</div></div>
<div style="position:absolute;left:424px;top:751.0px;width:577px;height:32px;overflow:hidden"><div class=c style="width:577.0px;text-align:left;color:#333">A global advertising and marketing communications company</div></div>
<div style="position:absolute;left:1310px;top:751.0px;width:178px;height:32px;overflow:hidden"><div class=c style="width:178.0px;text-align:right;color:#333">5</div></div>
<div style="position:absolute;left:1857px;top:751.0px;width:575px;height:32px;overflow:hidden"><div class=c style="width:575.0px;text-align:left;color:#333">{"ok":true,"text":"5","finishReason":"stop","predictedClass":"x"}</div></div>
<div style="position:absolute;left:38px;top:805.0px;width:374px;height:32px;overflow:hidden"><div class=c style="position:absolute;right:22.5px;top:0;width:max-content;transform-origin:100% 0">suited to individuals who like to …</div></div>
<div style="position:absolute;left:424px;top:805.0px;width:577px;height:32px;overflow:hidden"><div class=c style="width:577.0px;text-align:left;color:#333">Modeste Management Recruiting seeks motivated individuals</div></div>
<div style="position:absolute;left:1310px;top:805.0px;width:178px;height:32px;overflow:hidden"><div class=c style="width:178.0px;text-align:right;color:#333">2</div></div>
<div style="position:absolute;left:1857px;top:805.0px;width:575px;height:32px;overflow:hidden"><div class=c style="width:575.0px;text-align:left;color:#333">{"ok":true,"text":"2","finishReason":"stop","predictedClass":"x"}</div></div>
<div style="position:absolute;left:38px;top:859.0px;width:374px;height:32px;overflow:hidden"><div class=c style="position:absolute;right:22.0px;top:0;width:max-content;transform-origin:100% 0">required tefl tesol celta or teachi…</div></div>
<div style="position:absolute;left:424px;top:859.0px;width:577px;height:32px;overflow:hidden"><div class=c style="width:577.0px;text-align:left;color:#333">Paid jobs in Asia allow you to play with kids, travel, and more</div></div>
<div style="position:absolute;left:1310px;top:859.0px;width:178px;height:32px;overflow:hidden"><div class=c style="width:178.0px;text-align:right;color:#333">0</div></div>
<div style="position:absolute;left:1857px;top:859.0px;width:575px;height:32px;overflow:hidden"><div class=c style="width:575.0px;text-align:left;color:#333">{"ok":true,"text":"0","finishReason":"stop","predictedClass":"x"}</div></div>
<div style="position:absolute;left:38px;top:913.0px;width:374px;height:32px;overflow:hidden"><div class=c style="position:absolute;right:19.5px;top:0;width:max-content;transform-origin:100% 0">ave at least 3 years of experience …</div></div>
<div style="position:absolute;left:424px;top:913.0px;width:577px;height:32px;overflow:hidden"><div class=c style="width:577.0px;text-align:left;color:#333">Roka Security is hiring a mid-level FreeSWITCH VoIP engineer</div></div>
<div style="position:absolute;left:1310px;top:913.0px;width:178px;height:32px;overflow:hidden"><div class=c style="width:178.0px;text-align:right;color:#333">3</div></div>
<div style="position:absolute;left:1857px;top:913.0px;width:575px;height:32px;overflow:hidden"><div class=c style="width:575.0px;text-align:left;color:#333">{"ok":true,"text":"3","finishReason":"stop","predictedClass":"x"}</div></div>
<div style="position:absolute;left:38px;top:967.0px;width:374px;height:32px;overflow:hidden"><div class=c style="position:absolute;right:12.0px;top:0;width:max-content;transform-origin:100% 0">have a 4 year degree in quality eng…</div></div>
<div style="position:absolute;left:424px;top:967.0px;width:577px;height:32px;overflow:hidden"><div class=c style="width:577.0px;text-align:left;color:#333">A manufacturing client is seeking a quality engineer with experience</div></div>
<div style="position:absolute;left:1310px;top:967.0px;width:178px;height:32px;overflow:hidden"><div class=c style="width:178.0px;text-align:right;color:#333">3</div></div>
<div style="position:absolute;left:1857px;top:967.0px;width:575px;height:32px;overflow:hidden"><div class=c style="width:575.0px;text-align:left;color:#333">{"ok":true,"text":"3","finishReason":"stop","predictedClass":"x"}</div></div>
<div style="position:absolute;left:38px;top:1021.0px;width:374px;height:32px;overflow:hidden"><div class=c style="position:absolute;right:19.5px;top:0;width:max-content;transform-origin:100% 0">ble with atleast 1 yr of relevant ex…</div></div>
<div style="position:absolute;left:424px;top:1021.0px;width:577px;height:32px;overflow:hidden"><div class=c style="width:577.0px;text-align:left;color:#333">The role entails overseeing program content to ensure</div></div>
<div style="position:absolute;left:1310px;top:1021.0px;width:178px;height:32px;overflow:hidden"><div class=c style="width:178.0px;text-align:right;color:#333">1</div></div>
<div style="position:absolute;left:1857px;top:1021.0px;width:575px;height:32px;overflow:hidden"><div class=c style="width:575.0px;text-align:left;color:#333">{"ok":true,"text":"1","finishReason":"stop","predictedClass":"x"}</div></div>
<div style="position:absolute;left:424px;top:1075.0px;width:577px;height:32px;overflow:hidden"><div class=c style="width:577.0px;text-align:left;color:#333">The role of Online Customer Acquisition Manager at the company</div></div>
<div style="position:absolute;left:1310px;top:1075.0px;width:178px;height:32px;overflow:hidden"><div class=c style="width:178.0px;text-align:left;color:#333">""</div></div>
<div style="position:absolute;left:1857px;top:1075.0px;width:575px;height:32px;overflow:hidden"><div class=c style="width:575.0px;text-align:left;color:#333">{"ok":true,"text":"\"\"","finishReason":"stop","predictedClass":"x"}</div></div>
<div style="position:absolute;left:1491px;top:246px;width:469px;height:642px;background:#fff;box-sizing:border-box;border:1px solid #d6d6d6;box-shadow:0 4px 18px rgba(0,0,0,0.22)"></div>
<div style="position:absolute;left:1492px;top:487px;width:467px;height:40px;background:#ececec"></div>
<div style="position:absolute;left:1495px;top:426px;width:462px;height:3px;background:#e5e5e5"></div>
<div style="position:absolute;left:1495px;top:626px;width:462px;height:3px;background:#e5e5e5"></div>
<div style="position:absolute;left:1495px;top:786px;width:462px;height:3px;background:#e5e5e5"></div>
<div class=t style="left:1505.1px;top:253.5px;font-size:24.5px;font-weight:400;color:#999;font-family:'Liberation Sans';transform:scaleX(0.8785);-webkit-text-stroke:0.3px #999;">COLORING</div>
<svg style="position:absolute;left:1502px;top:296px;" width="30" height="24" viewBox="1502 296 30 24"><path d="M1508.5,307.5 L1514,313 L1526,301.5" stroke="#333" stroke-width="3" stroke-linecap="round" stroke-linejoin="round" fill="none"/></svg>
<div class=t style="left:1535.7px;top:293.2px;font-size:24.5px;font-weight:400;color:#333;font-family:'Liberation Sans';transform:scaleX(1.0066);-webkit-text-stroke:0.3px #333;">Meaning validity (all columns)</div>
<div class=t style="left:1536.7px;top:333.2px;font-size:24.5px;font-weight:400;color:#333;font-family:'Liberation Sans';transform:scaleX(1.0119);-webkit-text-stroke:0.3px #333;">Conditional formatting (can be slow)</div>
<div class=t style="left:1536.7px;top:372.9px;font-size:24.5px;font-weight:400;color:#333;font-family:'Liberation Sans';transform:scaleX(0.9772);-webkit-text-stroke:0.3px #333;">Color scale (all columns - can be slow)</div>
<div class=t style="left:1505.1px;top:452.5px;font-size:24.5px;font-weight:400;color:#999;font-family:'Liberation Sans';transform:scaleX(0.8913);-webkit-text-stroke:0.3px #999;">COLUMNS</div>
<div class=t style="left:1505.0px;top:493.3px;font-size:24.5px;font-weight:400;color:#333;font-family:'Liberation Sans';transform:scaleX(0.9938);-webkit-text-stroke:0.3px #333;">Select displayed columns</div>
<div class=t style="left:1504.0px;top:533.3px;font-size:24.5px;font-weight:400;color:#333;font-family:'Liberation Sans';transform:scaleX(0.9956);-webkit-text-stroke:0.3px #333;">Reset columns widths</div>
<div class=t style="left:1504.0px;top:573.7px;font-size:24.5px;font-weight:400;color:#333;font-family:'Liberation Sans';transform:scaleX(0.9903);-webkit-text-stroke:0.3px #333;">Reset columns order</div>
<div class=t style="left:1505.1px;top:653.1px;font-size:24.5px;font-weight:400;color:#999;font-family:'Liberation Sans';transform:scaleX(0.8627);-webkit-text-stroke:0.3px #999;">SORT</div>
<div class=t style="left:1505.0px;top:692.5px;font-size:24.5px;font-weight:400;color:#333;font-family:'Liberation Sans';transform:scaleX(0.9928);-webkit-text-stroke:0.3px #333;">Select sort columns</div>
<div class=t style="left:1505.0px;top:732.8px;font-size:24.5px;font-weight:400;color:#333;font-family:'Liberation Sans';transform:scaleX(0.9726);-webkit-text-stroke:0.3px #333;">Clear sort</div>
<div class=t style="left:1506.0px;top:812.5px;font-size:24.5px;font-weight:400;color:#999;font-family:'Liberation Sans';transform:scaleX(0.8711);-webkit-text-stroke:0.3px #999;">WHITE SPACES</div>
<div class=t style="left:1503.9px;top:852.7px;font-size:24.5px;font-weight:400;color:#333;font-family:'Liberation Sans';transform:scaleX(1.0337);-webkit-text-stroke:0.3px #333;">Highlight leading, trailing and multiple</div>
<svg style="position:absolute;left:0;top:0" width="2556" height="1120"><defs><filter id="sh" x="-20%" y="-20%" width="140%" height="140%"><feDropShadow dx="1" dy="2.5" stdDeviation="1.2" flood-color="#000" flood-opacity="0.55"/></filter></defs><path d="M1327.5,396.0 L1265.5,361.0 A40.6,40.6 0 1 0 1265.7,431.5 Z" fill="#fd5a4c" filter="url(#sh)"/><path d="M1790.0,512.5 L1852.5,548.5 A41,41 0 1 0 1853.0,477.2 Z" fill="#fd5a4c" filter="url(#sh)"/></svg>
<div class=t style="left:1234.5px;top:365.3px;font-size:54px;font-weight:400;color:#fff;font-family:'Liberation Sans';transform:scaleX(0.9643);">4</div>
<div class=t style="left:1852.5px;top:482.3px;font-size:54px;font-weight:400;color:#fff;font-family:'Liberation Sans';">2</div>
</body></html>
